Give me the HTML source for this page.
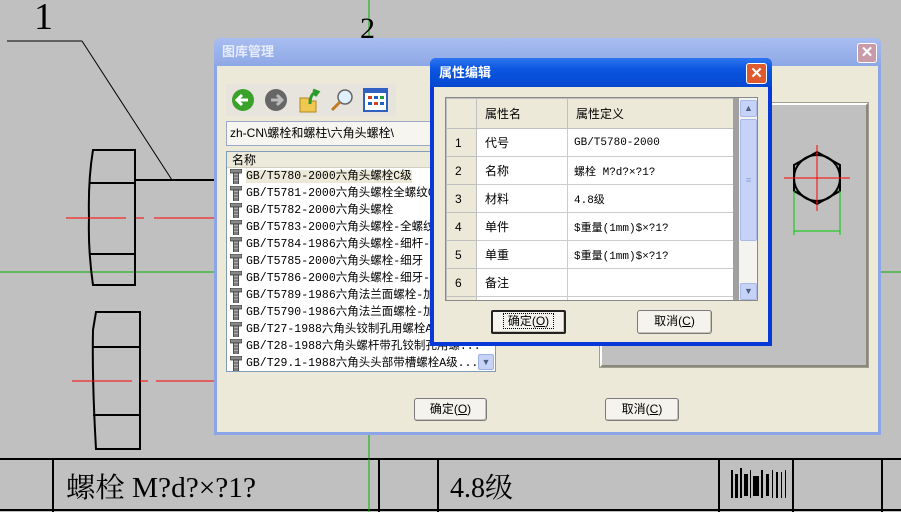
<!DOCTYPE html>
<html><head><meta charset="utf-8"><style>
*{margin:0;padding:0;box-sizing:border-box}
body{width:901px;height:512px;background:#c0c0c0;position:relative;overflow:hidden;font-family:"Liberation Sans","Noto Sans CJK SC",sans-serif;font-size:12px}
.a{position:absolute}
.btn{position:absolute;background:#f4f3ee;border:1px solid #7a7a7a;border-radius:3px;text-align:center;line-height:21px;font-size:12px;color:#000;box-shadow:inset -1px -1px 0 #c7c4b5}
.mono{font-family:"Liberation Mono","Noto Sans CJK SC",monospace}
.rows>div{height:17px;line-height:17px;overflow:hidden;position:relative;padding-left:19px}
.ic{position:absolute;left:3px;top:1px;width:12px;height:15px}
</style></head><body>
<svg width="0" height="0" style="position:absolute"><defs><g id="scr"><rect x="0" y="0" width="12" height="4" rx="1" fill="#888" stroke="#333" stroke-width="0.8"/><rect x="3.5" y="4" width="5" height="11" fill="#aaa" stroke="#333" stroke-width="0.8"/><path d="M3.5 7h5M3.5 10h5M3.5 13h5" stroke="#333" stroke-width="0.8"/></g></defs></svg>
<!-- CAD drawing -->
<svg class="a" style="left:0;top:0" width="901" height="512">
<line x1="369" y1="0" x2="369" y2="512" stroke="#00b000" stroke-width="1"/>
<line x1="0" y1="272" x2="214" y2="272" stroke="#00b000"/>
<line x1="881" y1="272" x2="901" y2="272" stroke="#00b000"/>
<line x1="7" y1="41" x2="82" y2="41" stroke="#000"/>
<line x1="82" y1="41" x2="172" y2="180" stroke="#000"/>
<path d="M93 150 L135 150 L135 285 L93 285 Q88 250 89 218 Q88 180 93 150Z M89 183 L135 183 M89 254 L135 254" fill="none" stroke="#000" stroke-width="2"/>
<line x1="135" y1="180" x2="214" y2="180" stroke="#000" stroke-width="2"/>
<line x1="66" y1="218" x2="214" y2="218" stroke="#f00" stroke-dasharray="60,10,8,10"/>
<path d="M96 312 L140 312 L140 449 L96 449 Q92 380 93 330Z M93 347 L140 347 M93 415 L140 415" fill="none" stroke="#000" stroke-width="2"/>
<line x1="72" y1="381" x2="214" y2="381" stroke="#f00" stroke-dasharray="60,8,8,8"/>
<line x1="0" y1="459" x2="901" y2="459" stroke="#000" stroke-width="2"/>
<line x1="0" y1="510" x2="901" y2="510" stroke="#000" stroke-width="2"/>
<g stroke="#000" stroke-width="2"><line x1="53" y1="459" x2="53" y2="512"/><line x1="379" y1="459" x2="379" y2="512"/><line x1="438" y1="459" x2="438" y2="512"/><line x1="719" y1="459" x2="719" y2="512"/><line x1="793" y1="459" x2="793" y2="512"/><line x1="882" y1="459" x2="882" y2="512"/></g>
<line x1="369" y1="459" x2="369" y2="512" stroke="#00b000"/>
<text x="34" y="29" font-family="Liberation Serif" font-size="38">1</text>
<text x="360" y="38" font-family="Liberation Serif" font-size="30">2</text>
<text x="66" y="497" font-family="Liberation Serif,'Noto Serif CJK SC',serif" font-size="28" textLength="190" lengthAdjust="spacingAndGlyphs">螺栓 M?d?×?1?</text>
<text x="450" y="497" font-family="Liberation Serif,'Noto Serif CJK SC',serif" font-size="28">4.8级</text>
<g fill="#000"><rect x="731" y="470" width="2" height="28"/><rect x="735" y="474" width="3" height="24"/><rect x="740" y="468" width="2" height="30"/><rect x="744" y="474" width="4" height="22"/><rect x="750" y="470" width="1" height="28"/><rect x="753" y="476" width="6" height="20"/><rect x="761" y="470" width="2" height="28"/><rect x="766" y="474" width="3" height="22"/><rect x="772" y="470" width="1" height="28"/><rect x="776" y="472" width="2" height="26"/><rect x="781" y="472" width="1" height="26"/><rect x="785" y="470" width="1" height="28"/></g>
</svg>

<!-- main dialog -->
<div class="a" style="left:214px;top:38px;width:667px;height:397px;background:#ece9d8;border:3px solid #8aa6e8;border-top:0;border-radius:6px 6px 0 0">
 <div class="a" style="left:-3px;top:0;width:667px;height:28px;background:linear-gradient(#a8bdf0,#8ea8e6);border-radius:6px 6px 0 0;color:#e6ecfa;font-weight:bold;font-size:13px;line-height:28px;padding-left:8px">图库管理</div>
 <div class="a" style="left:640px;top:5px;width:20px;height:20px;background:#c99aa8;border:1px solid #fff;border-radius:3px;color:#fff;font-weight:bold;text-align:center;line-height:18px;font-size:15px">✕</div>
</div>
<!-- toolbar -->
<div class="a" style="left:226px;top:84px;width:170px;height:32px;background:#e6e4dc"></div>
<svg class="a" style="left:230px;top:88px" width="165" height="26">
<circle cx="13" cy="12" r="11" fill="#3aa22a"/><path d="M18 12H8M12 7L7 12L12 17" stroke="#fff" stroke-width="3" fill="none"/>
<circle cx="46" cy="12" r="11" fill="#666"/><path d="M41 12H51M47 7L52 12L47 17" stroke="#bbb" stroke-width="3" fill="none"/>
<path d="M70 10h8l2 3h6v11h-16z" fill="#f0c850" stroke="#b08a20"/><path d="M80 16 Q80 6 86 4 M83 2 L88 4 L85 8" stroke="#2a9a2a" stroke-width="3" fill="none"/>
<circle cx="115" cy="9" r="7" fill="#dff0ff" stroke="#666" stroke-width="1.5"/><line x1="110" y1="14" x2="102" y2="22" stroke="#c07a20" stroke-width="3"/>
<rect x="134" y="1" width="23" height="22" fill="#fff" stroke="#3060c0" stroke-width="2"/><rect x="134" y="1" width="23" height="4" fill="#3060c0"/>
<g fill="#d04020"><rect x="138" y="8" width="4" height="3"/><rect x="144" y="8" width="4" height="3" fill="#2060c0"/><rect x="150" y="8" width="4" height="3" fill="#20a040"/><rect x="138" y="14" width="4" height="3" fill="#2060c0"/><rect x="144" y="14" width="4" height="3"/><rect x="150" y="14" width="4" height="3" fill="#2060c0"/></g>
</svg>
<div class="a" style="left:226px;top:121px;width:210px;height:25px;background:#f6f5f0;border:1px solid #9aa8c8;line-height:23px;padding-left:3px;font-size:12px">zh-CN\螺栓和螺柱\六角头螺栓\</div>
<!-- list -->
<div class="a" style="left:226px;top:151px;width:270px;height:221px;background:#fff;border:1px solid #7f9db9;overflow:hidden">
 <div style="height:16px;background:#ebeadb;border-bottom:1px solid #d0cfc0;line-height:16px;padding-left:5px">名称</div>
 <div class="mono rows" style="font-size:11.5px;white-space:nowrap">
 <div><svg class="ic"><use href="#scr"/></svg><span style="background:#ece9d8">GB/T5780-2000六角头螺栓C级</span></div>
 <div><svg class="ic"><use href="#scr"/></svg>GB/T5781-2000六角头螺栓全螺纹C级</div>
 <div><svg class="ic"><use href="#scr"/></svg>GB/T5782-2000六角头螺栓</div>
 <div><svg class="ic"><use href="#scr"/></svg>GB/T5783-2000六角头螺栓-全螺纹</div>
 <div><svg class="ic"><use href="#scr"/></svg>GB/T5784-1986六角头螺栓-细杆-B级</div>
 <div><svg class="ic"><use href="#scr"/></svg>GB/T5785-2000六角头螺栓-细牙</div>
 <div><svg class="ic"><use href="#scr"/></svg>GB/T5786-2000六角头螺栓-细牙-全</div>
 <div><svg class="ic"><use href="#scr"/></svg>GB/T5789-1986六角法兰面螺栓-加大</div>
 <div><svg class="ic"><use href="#scr"/></svg>GB/T5790-1986六角法兰面螺栓-加大</div>
 <div><svg class="ic"><use href="#scr"/></svg>GB/T27-1988六角头铰制孔用螺栓A和</div>
 <div><svg class="ic"><use href="#scr"/></svg>GB/T28-1988六角头螺杆带孔铰制孔用螺...</div>
 <div><svg class="ic"><use href="#scr"/></svg>GB/T29.1-1988六角头头部带槽螺栓A级...</div>
 </div>
 <div class="a" style="left:251px;top:202px;width:16px;height:16px;background:#c6d3f7;border:1px solid #9db0e0;border-radius:2px;color:#4d6185;font-size:9px;text-align:center;line-height:14px">▼</div>
</div>
<!-- preview -->
<div class="a" style="left:600px;top:103px;width:268px;height:264px;background:#c0c0c0;border:2px solid #fff;border-right-color:#8a8878;border-bottom-color:#8a8878;outline:1px solid #a09e90"></div>
<svg class="a" style="left:780px;top:145px" width="90" height="95">
<polygon points="37,7 60,20 60,46 37,59 14,46 14,20" fill="none" stroke="#000" stroke-width="2"/>
<circle cx="37" cy="33" r="23" fill="none" stroke="#000" stroke-width="2"/>
<line x1="4" y1="33" x2="70" y2="33" stroke="#f00"/><line x1="37" y1="0" x2="37" y2="66" stroke="#f00"/>
<path d="M14 46V90M60 46V90M14 86H60" stroke="#0c0" fill="none"/>
</svg>
<div class="btn" style="left:414px;top:398px;width:73px;height:23px">确定(<u>O</u>)</div>
<div class="btn" style="left:605px;top:398px;width:74px;height:23px">取消(<u>C</u>)</div>

<!-- property dialog -->
<div class="a" style="left:430px;top:58px;width:342px;height:288px;background:#ece9d8;border:4px solid #0838d8;border-top:0;border-radius:6px 6px 0 0">
 <div class="a" style="left:-4px;top:0;width:342px;height:29px;background:linear-gradient(#2d75f0,#0a55e0 40%,#0548d0);border-radius:6px 6px 0 0;color:#fff;font-weight:bold;font-size:13px;line-height:30px;padding-left:9px">属性编辑</div>
 <div class="a" style="left:312px;top:5px;width:21px;height:21px;background:#e05a30;border:1px solid #fff;border-radius:3px;color:#fff;font-weight:bold;text-align:center;line-height:19px;font-size:15px">✕</div>
</div>
<div class="a" style="left:445px;top:97px;width:313px;height:204px;background:#fff;border:1px solid #888;overflow:hidden">
 <table style="border-collapse:collapse;font-size:12px;position:absolute;left:0;top:0">
 <tr style="height:30px;background:#ece9d8"><td style="width:30px;border:1px solid #c0c0c0"></td><td style="width:91px;border:1px solid #c0c0c0;padding-left:8px">属性名</td><td style="width:166px;border:1px solid #c0c0c0;padding-left:8px">属性定义</td></tr>
 <tr style="height:28px"><td style="background:#ece9d8;border:1px solid #c0c0c0;padding-left:8px">1</td><td style="border:1px solid #ccc;padding-left:8px">代号</td><td class="mono" style="border:1px solid #ccc;padding-left:6px;font-size:11px">GB/T5780-2000</td></tr>
 <tr style="height:28px"><td style="background:#ece9d8;border:1px solid #c0c0c0;padding-left:8px">2</td><td style="border:1px solid #ccc;padding-left:8px">名称</td><td class="mono" style="border:1px solid #ccc;padding-left:6px;font-size:11px">螺栓 M?d?×?1?</td></tr>
 <tr style="height:28px"><td style="background:#ece9d8;border:1px solid #c0c0c0;padding-left:8px">3</td><td style="border:1px solid #ccc;padding-left:8px">材料</td><td class="mono" style="border:1px solid #ccc;padding-left:6px;font-size:11px">4.8级</td></tr>
 <tr style="height:28px"><td style="background:#ece9d8;border:1px solid #c0c0c0;padding-left:8px">4</td><td style="border:1px solid #ccc;padding-left:8px">单件</td><td class="mono" style="border:1px solid #ccc;padding-left:6px;font-size:11px">$重量(1mm)$×?1?</td></tr>
 <tr style="height:28px"><td style="background:#ece9d8;border:1px solid #c0c0c0;padding-left:8px">5</td><td style="border:1px solid #ccc;padding-left:8px">单重</td><td class="mono" style="border:1px solid #ccc;padding-left:6px;font-size:11px">$重量(1mm)$×?1?</td></tr>
 <tr style="height:28px"><td style="background:#ece9d8;border:1px solid #c0c0c0;padding-left:8px">6</td><td style="border:1px solid #ccc;padding-left:8px">备注</td><td style="border:1px solid #ccc"></td></tr>
 <tr style="height:28px"><td style="background:#ece9d8;border:1px solid #c0c0c0"></td><td style="border:1px solid #ccc"></td><td style="border:1px solid #ccc"></td></tr>
 </table>
 <div class="a" style="left:287px;top:0;width:6px;height:204px;background:#a0a0a0"></div>
 <div class="a" style="left:293px;top:0;width:19px;height:204px;background:#f3f3ef"></div>
 <div class="a" style="left:294px;top:2px;width:17px;height:17px;background:#c6d3f7;border:1px solid #a8b8e8;border-radius:2px;color:#4d6185;font-size:9px;text-align:center;line-height:15px">▲</div>
 <div class="a" style="left:294px;top:21px;width:17px;height:122px;background:#c6d3f7;border:1px solid #a8b8e8;border-radius:2px;color:#8aa0d8;text-align:center;line-height:120px;font-size:9px">≡</div>
 <div class="a" style="left:294px;top:185px;width:17px;height:17px;background:#c6d3f7;border:1px solid #a8b8e8;border-radius:2px;color:#4d6185;font-size:9px;text-align:center;line-height:15px">▼</div>
</div>
<div class="btn" style="left:491px;top:310px;width:75px;height:24px;border:2px solid #222;border-radius:2px;line-height:19px"><span style="outline:1px dotted #000;padding:0 4px">确定(<u>O</u>)</span></div>
<div class="btn" style="left:637px;top:310px;width:75px;height:24px">取消(<u>C</u>)</div>
</body></html>
